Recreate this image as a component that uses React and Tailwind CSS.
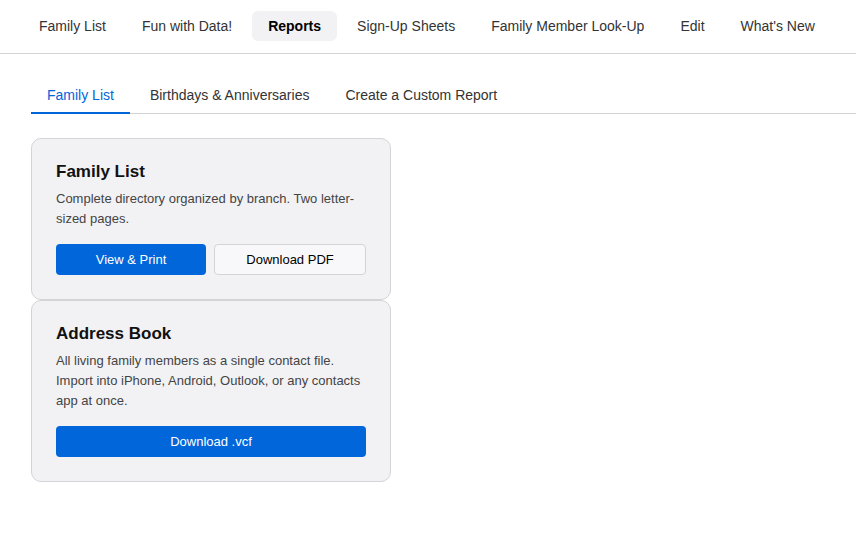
import React from "react";

const navItems = ["Family List", "Fun with Data!", "Reports", "Sign-Up Sheets", "Family Member Look-Up", "Edit", "What's New"];
const tabs = ["Family List", "Birthdays & Anniversaries", "Create a Custom Report"];

function Card({ title, desc, children }) {
  return (
    <div className="w-[360px] rounded-[10px] border border-[#d4d4d8] bg-[#f2f2f5] px-6 py-6">
      <h2 className="text-[17px] font-bold leading-[18px] text-[#111]">{title}</h2>
      <p className="mt-2 text-[13px] leading-5 text-[#444]">{desc}</p>
      <div className="mt-[15px] flex gap-2">{children}</div>
    </div>
  );
}

export default function App() {
  return (
    <div className="min-h-screen bg-white" style={{ fontFamily: '"Liberation Sans", Arial, sans-serif' }}>
      <nav className="flex gap-1 border-b border-[#d4d4d8] pl-[23px] pt-[11px] pb-[12px]">
        {navItems.map((item) => (
          <div
            key={item}
            className={
              item === "Reports"
                ? "h-[30px] rounded-md bg-[#f2f2f5] px-4 text-sm font-bold leading-[30px] text-black"
                : "h-[30px] px-4 text-sm leading-[30px] text-[#333]"
            }
          >
            {item}
          </div>
        ))}
      </nav>
      <div className="pl-[31px] pt-[23px]">
        <div className="flex gap-1 border-b border-[#d4d4d8]">
          {tabs.map((t, i) => (
            <div
              key={t}
              className={
                i === 0
                  ? "-mb-px border-b-2 border-[#0066da] px-4 pt-2 pb-[7px] text-sm leading-5 text-[#0066da]"
                  : "-mb-px border-b-2 border-transparent px-4 pt-2 pb-[7px] text-sm leading-5 text-[#333]"
              }
            >
              {t}
            </div>
          ))}
        </div>
        <div className="mt-6 flex flex-col">
          <Card title="Family List" desc="Complete directory organized by branch. Two letter-sized pages.">
            <button className="h-[31px] flex-1 rounded-[4px] bg-[#0066da] text-[13px] text-white">View &amp; Print</button>
            <button className="h-[31px] flex-1 rounded-[4px] border border-[#d4d4d8] bg-[#f8f8fa] text-[13px] text-black">Download PDF</button>
          </Card>
          <Card
            title="Address Book"
            desc="All living family members as a single contact file. Import into iPhone, Android, Outlook, or any contacts app at once."
          >
            <button className="h-[31px] flex-1 rounded-[4px] bg-[#0066da] text-[13px] text-white">Download .vcf</button>
          </Card>
        </div>
      </div>
    </div>
  );
}
